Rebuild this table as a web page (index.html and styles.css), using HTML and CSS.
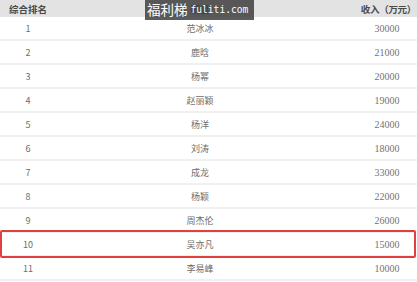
FILE: index.html
```html
<!DOCTYPE html>
<html lang="zh">
<head>
<meta charset="utf-8">
<link rel="stylesheet" href="styles.css">
</head>
<body>
<div class="table">
  <div class="row head">
    <div class="c rank">综合排名</div>
    <div class="c name">明星</div>
    <div class="c inc">收入（万元）</div>
    <div class="mark"><span class="mk-cn">福利梯</span><span class="mk-en">fuliti.com</span></div>
  </div>
  <div class="row"><div class="c rank">1</div><div class="c name">范冰冰</div><div class="c num">30000</div></div>
  <div class="row"><div class="c rank">2</div><div class="c name">鹿晗</div><div class="c num">21000</div></div>
  <div class="row"><div class="c rank">3</div><div class="c name">杨幂</div><div class="c num">20000</div></div>
  <div class="row"><div class="c rank">4</div><div class="c name">赵丽颖</div><div class="c num">19000</div></div>
  <div class="row"><div class="c rank">5</div><div class="c name">杨洋</div><div class="c num">24000</div></div>
  <div class="row"><div class="c rank">6</div><div class="c name">刘涛</div><div class="c num">18000</div></div>
  <div class="row"><div class="c rank">7</div><div class="c name">成龙</div><div class="c num">33000</div></div>
  <div class="row"><div class="c rank">8</div><div class="c name">杨颖</div><div class="c num">22000</div></div>
  <div class="row"><div class="c rank">9</div><div class="c name">周杰伦</div><div class="c num">26000</div></div>
  <div class="row hl"><div class="c rank">10</div><div class="c name">吴亦凡</div><div class="c num">15000</div></div>
  <div class="row"><div class="c rank">11</div><div class="c name">李易峰</div><div class="c num">10000</div></div>
</div>
</body>
</html>
```

FILE: styles.css
```css
html, body {
  margin: 0;
  padding: 0;
  background: #fff;
  width: 417px;
  height: 282px;
  overflow: hidden;
}
.table {
  font-family: "Noto Sans CJK SC", "Liberation Sans", sans-serif;
  color: #6e6e6e;
  font-size: 9px;
}
.row {
  display: grid;
  grid-template-columns: 55px 290px 72px;
  align-items: center;
  height: 22px;
  border-bottom: 2px solid #f0f0f0;
  position: relative;
}
.row.head {
  height: 17px;
  border-bottom: none;
  background: #e3e3e3;
  color: #4a4a4a;
  font-weight: bold;
  font-size: 9.5px;
}
.c {
  text-align: center;
  white-space: nowrap;
}
.head .inc {
  text-align: right;
  padding-right: 1px;
  letter-spacing: -0.3px;
}
.num {
  font-family: "Liberation Serif", serif;
  font-size: 10px;
  color: #737373;
  padding-left: 12px;
}
.rank {
  padding-left: 1px;
}
.hl::after {
  content: "";
  position: absolute;
  left: 0;
  top: -3px;
  right: 1px;
  bottom: -3px;
  border: 2px solid #e2403f;
  border-radius: 2px;
}
.mark {
  position: absolute;
  left: 145px;
  top: 0;
  width: 109px;
  height: 20px;
  background: rgba(62, 62, 62, 0.85);
  color: #fff;
  display: flex;
  align-items: center;
  gap: 3px;
  padding-left: 2px;
  box-sizing: border-box;
  font-weight: normal;
  white-space: nowrap;
}
.mk-cn {
  font-family: "Noto Sans CJK SC", sans-serif;
  font-size: 13.5px;
  line-height: 1;
  flex-shrink: 0;
}
.mk-en {
  font-family: "DejaVu Sans Mono", monospace;
  font-size: 9.6px;
  line-height: 1;
  flex-shrink: 0;
}
```
